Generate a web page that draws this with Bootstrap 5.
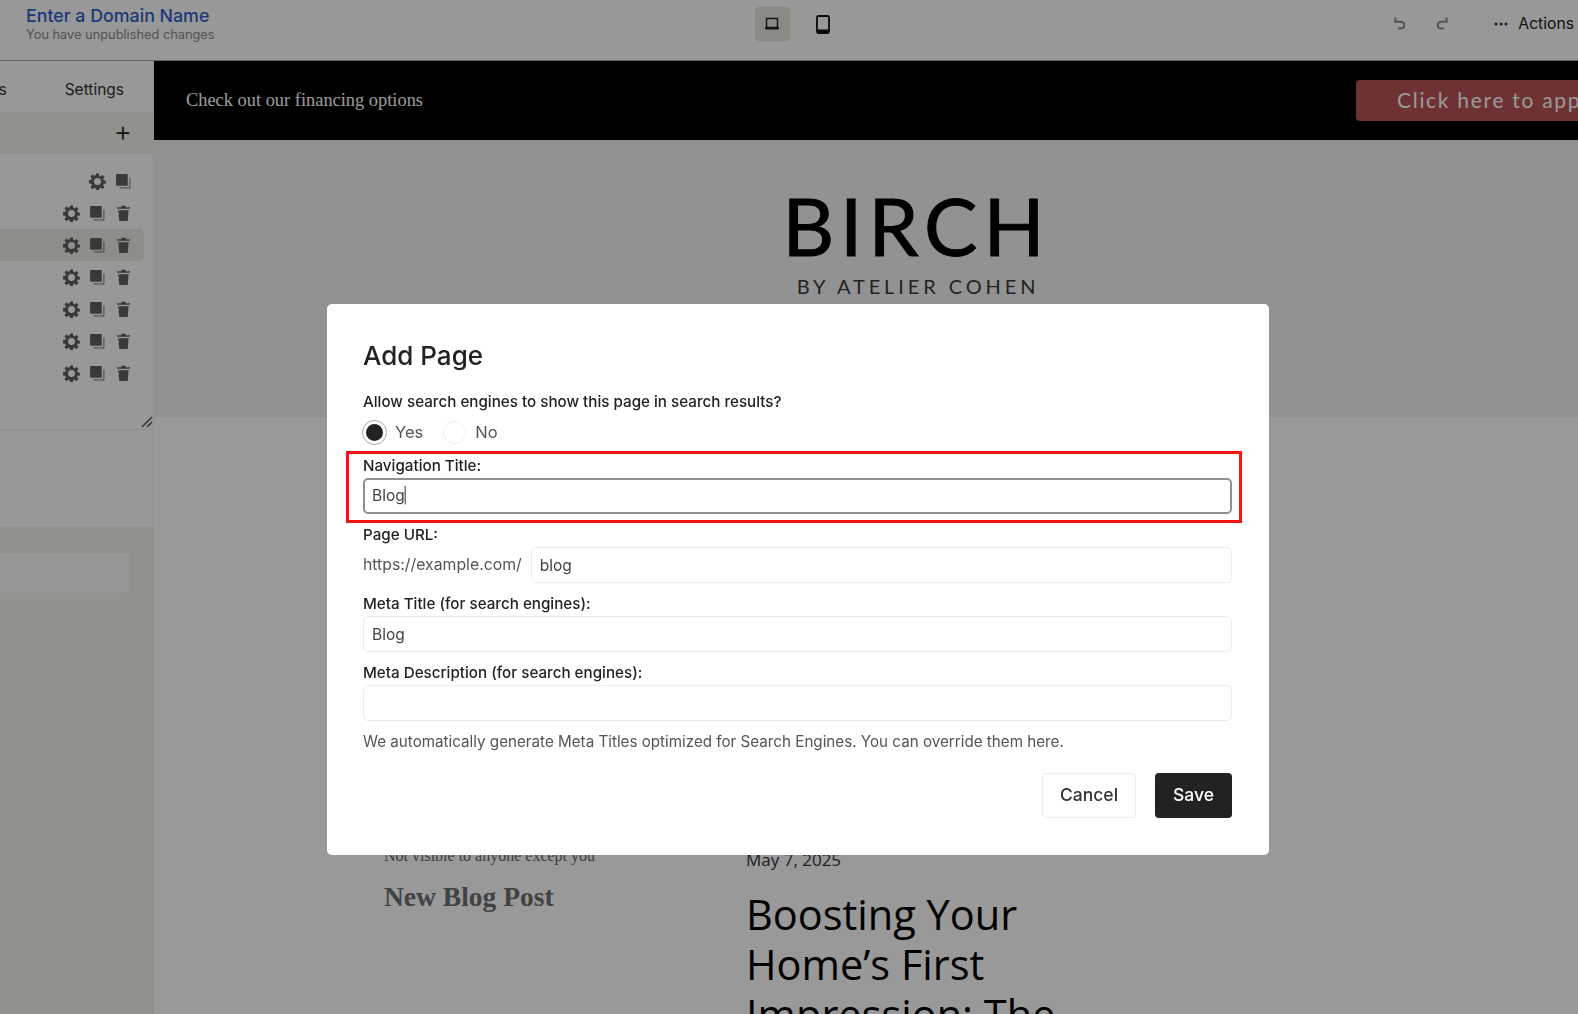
<!DOCTYPE html>
<html lang="en">
<head>
    <meta charset="UTF-8">
    <meta name="viewport" content="width=device-width, initial-scale=1.0">
    <title>Add Page</title>
    <link href="https://cdn.jsdelivr.net/npm/bootstrap@5.3.0/dist/css/bootstrap.min.css" rel="stylesheet">
    <style>
        html, body { height: 100%; overflow: hidden; }
        body { font-family: "Inter", "Liberation Sans", sans-serif; background: #fff; color: #222; }

        /* editor behind the dialog */
        .top-bar { height: 61px; padding-bottom: 12px; border-bottom: 1px solid #a8a8a8; background: #fdfdfd; }
        .domain-block { width: 755px; padding: 1px 0 0 26px; }
        .domain-name { font-size: 17.800px; font-weight: 500; line-height: 19px; color: #2f5fc9; }
        .domain-note { font-size: 12.800px; line-height: 16px; color: #8a8a8a; margin-top: 2px; }
        .device-btn { width: 35px; height: 34px; border-radius: 4px; }
        .device-btn.is-on { background: #e8e8df; }
        .device-btn svg { position: relative; left: -1px; }
        .history-btn { width: 17px; height: 17px; color: #8d8d8d; }
        .redo-btn { margin-left: 24px; }
        .more-dots { margin-left: 44px; }
        .actions-txt { font-size: 15.700px; color: #222; margin-left: 10px; }
        .work-area { height: 953px; }

        .side-panel { width: 154px; flex: none; overflow: hidden; border-right: 1px solid #f0f0ea; background: #fdfdfd; }
        .panel-tabs { height: 51px; padding: 6px 29px 0 0; gap: 58px; font-size: 15.500px; color: #333; }
        .panel-head { height: 42px; padding: 0 21px 4px 0; background: #f0f0ea; font-size: 28px; font-weight: 300; line-height: 1; color: #222; }
        .page-list { height: 276px; padding: 11px 9px 0 0; border-bottom: 1px solid #eeeeea; position: relative; }
        .page-row { height: 32px; padding-right: 12px; gap: 9px; border-radius: 0 5px 5px 0; color: #5f5f5f; }
        .page-row.is-on { background: #ecece6; }
        .page-row svg { width: 17px; height: 17px; }
        .resize-mark { position: absolute; right: 0; bottom: 1px; width: 12px; height: 12px; color: #555; }
        .panel-gap { height: 97px; }
        .panel-lower { height: 490px; padding-top: 26px; background: #f0f0ea; }
        .lower-box { width: 129px; height: 39px; background: #fafaf7; }
        .lower-strip { width: 120px; height: 8px; background: #f5f5f0; }

        .promo-bar { height: 79px; padding: 0 0 0 32px; background: #000; overflow: hidden; }
        .promo-txt { font-family: "Liberation Serif", serif; font-size: 18.400px; color: #fff; }
        .promo-btn { height: 41px; margin-left: 933px; padding: 0 0 2px 41px; width: 300px; flex: none; border-radius: 4px; background: #b85454; color: #fff; font-family: "Lato", sans-serif; font-size: 21px; letter-spacing: 1.700px; white-space: nowrap; }
        .logo-band { height: 277px; padding-top: 45px; background: #f3f3f3; text-align: center; }
        .logo-main { font-family: "Lato", sans-serif; font-size: 80px; line-height: 80px; letter-spacing: 6px; color: #000; padding-left: 101px; -webkit-text-stroke: 1px #000; }
        .logo-sub { font-family: "Lato", sans-serif; font-size: 20px; line-height: 24px; letter-spacing: 3.900px; color: #3a3a3a; padding-left: 104px; margin-top: 9px; }
        .blog-area { padding: 429px 0 0 230px; background: #fff; }
        .draft-col { width: 362px; }
        .draft-note { font-family: "Liberation Serif", serif; font-size: 16px; line-height: 20px; color: #666; }
        .draft-title { font-family: "Liberation Serif", serif; font-size: 27.500px; font-weight: 700; line-height: 32px; color: #6e6e6e; margin-top: 15px; }
        .post-col { width: 340px; padding-top: 4px; }
        .post-date { font-family: "Open Sans", sans-serif; font-size: 17px; line-height: 20px; color: #333; }
        .post-title { font-family: "Open Sans", sans-serif; font-size: 41.500px; font-weight: 400; line-height: 50px; color: #000; margin-top: 19px; }

        /* dialog */
        .modal-backdrop.show { opacity: .4; }
        .add-page-dialog { width: 942px; max-width: none; margin: 304px 0 0 327px; }
        .add-page-dialog .modal-content { height: 551px; padding: 33px 37px 0 36px; border: 0; border-radius: 5px; }
        .dialog-title { font-size: 26px; font-weight: 500; line-height: 38px; color: #222; margin-bottom: 18px; }
        .field-label { display: block; margin: 0; font-size: 15.200px; font-weight: 500; line-height: 18px; color: #222; }
        .radio-row { gap: 20px; height: 24px; margin: 9px 0 7px; font-size: 16.500px; color: #555; }
        .radio-dot { width: 23px; height: 23px; margin: 0 9px 0 0; border: 1px solid #eeeee8; box-shadow: none; }
        .radio-dot:checked { background-color: #222; background-image: none; border: 3px solid #fff; outline: 1px solid #aaa; }
        .title-frame { height: 72px; margin: 0 -10px 0 -17px; padding: 3px 7px 0 14px; border: 3px solid #f51414; }
        .title-frame .field-label { margin-bottom: 3px; }
        .page-input { height: 36px; padding: 0 8px; border: 1px solid #eeeee6; border-radius: 5px; font-size: 15.500px; color: #444; box-shadow: none; }
        .title-frame .page-input { border: 2px solid #909090; padding: 0 7px; }
        .text-caret { position: relative; left: -2px; font-weight: 300; color: #222; }
        .field-block { margin-top: 12px; }
        .field-block .field-label { margin-bottom: 3px; }
        .url-block { margin-top: 3px; }
        .url-row { gap: 9px; }
        .url-prefix { font-size: 15.800px; color: #555; white-space: nowrap; }
        .help-note { font-size: 15.200px; line-height: 20px; color: #555; margin: 11px 0 21px; }
        .dialog-btns { gap: 19px; }
        .dialog-btn { height: 45px; font-size: 17.500px; font-weight: 500; border-radius: 4px; padding: 0 10px; }
        .btn-quiet { width: 94px; border: 1px solid #eeeee6; color: #333; background: #fff; }
        .btn-solid { width: 77px; border: 0; color: #fff; background: #222; }
    </style>
</head>
<body>
    <!-- icons -->
    <svg width="0" height="0" class="position-absolute">
        <symbol id="ic-gear" viewBox="0 0 16 16"><path fill="currentColor" fill-rule="evenodd" d="M6.700.5h2.600l.4 2.200 1.200.5 1.900-1.300 1.800 1.800-1.300 1.900.5 1.200 2.200.4v2.600l-2.200.4-.5 1.200 1.300 1.900-1.800 1.800-1.900-1.300-1.200.5-.4 2.200H6.700l-.4-2.200-1.200-.5-1.900 1.300-1.800-1.800 1.300-1.900-.5-1.200-2.200-.4V6.700l2.200-.4.5-1.200-1.300-1.900 1.800-1.800 1.900 1.300 1.200-.5zM8 4.700a3.300 3.300 0 1 0 0 6.600a3.300 3.300 0 0 0 0-6.600z"/></symbol>
        <symbol id="ic-copy" viewBox="0 0 16 16"><rect x="1" y="1" width="11" height="11" rx="1" fill="currentColor"/><path d="M14 4.500V14H4.500" fill="none" stroke="currentColor" stroke-width="1.200" opacity=".7"/></symbol>
        <symbol id="ic-trash" viewBox="0 0 16 16"><path fill="currentColor" d="M6 .8h4v1.300h4v1.500H2V2.100h4zM3.200 5h9.600l-.8 10H4z"/></symbol>
    </svg>

    <!-- Top bar -->
    <div class="top-bar d-flex align-items-center">
        <div class="domain-block flex-shrink-0">
            <div class="domain-name">Enter a Domain Name</div>
            <div class="domain-note">You have unpublished changes</div>
        </div>
        <div class="device-btn is-on d-flex align-items-center justify-content-center flex-shrink-0">
            <svg width="16" height="14" viewBox="0 0 16 14"><rect x="2.500" y="1.500" width="11" height="9" fill="none" stroke="#222" stroke-width="1.500"/><rect x="1" y="10.500" width="14" height="2" fill="#222"/></svg>
        </div>
        <div class="device-btn d-flex align-items-center justify-content-center flex-shrink-0 ms-3">
            <svg width="14" height="19" viewBox="0 0 14 19"><rect x="1" y="1" width="12" height="17" rx="1.500" fill="none" stroke="#111" stroke-width="1.800"/><rect x="1" y="14.500" width="12" height="3.500" fill="#111"/></svg>
        </div>
        <div class="d-flex align-items-center ms-auto flex-shrink-0">
            <svg class="history-btn" viewBox="0 0 20 20"><path d="M4 3v5h5M4.500 8h6a4 4 0 0 1 0 8H7" fill="none" stroke="currentColor" stroke-width="2.400"/></svg>
            <svg class="history-btn redo-btn" viewBox="0 0 20 20"><path d="M16 3v5h-5M15.500 8h-6a4 4 0 0 0 0 8H13" fill="none" stroke="currentColor" stroke-width="2.400"/></svg>
            <svg class="more-dots" width="14" height="4" viewBox="0 0 14 4"><circle cx="2" cy="2" r="1.500" fill="#333"/><circle cx="7" cy="2" r="1.500" fill="#333"/><circle cx="12" cy="2" r="1.500" fill="#333"/></svg>
            <span class="actions-txt me-1">Actions</span>
        </div>
    </div>

    <div class="work-area d-flex">
        <!-- Left panel -->
        <aside class="side-panel">
            <div class="panel-tabs d-flex align-items-center justify-content-end"><span>Pages</span><span>Settings</span></div>
            <div class="panel-head d-flex align-items-center justify-content-end">+</div>
            <div class="page-list">
                <div class="page-row d-flex align-items-center justify-content-end">
                    <svg><use href="#ic-gear"/></svg><svg><use href="#ic-copy"/></svg>
                </div>
                <div class="page-row d-flex align-items-center justify-content-end"><svg><use href="#ic-gear"/></svg><svg><use href="#ic-copy"/></svg><svg><use href="#ic-trash"/></svg></div>
                <div class="page-row is-on d-flex align-items-center justify-content-end"><svg><use href="#ic-gear"/></svg><svg><use href="#ic-copy"/></svg><svg><use href="#ic-trash"/></svg></div>
                <div class="page-row d-flex align-items-center justify-content-end"><svg><use href="#ic-gear"/></svg><svg><use href="#ic-copy"/></svg><svg><use href="#ic-trash"/></svg></div>
                <div class="page-row d-flex align-items-center justify-content-end"><svg><use href="#ic-gear"/></svg><svg><use href="#ic-copy"/></svg><svg><use href="#ic-trash"/></svg></div>
                <div class="page-row d-flex align-items-center justify-content-end"><svg><use href="#ic-gear"/></svg><svg><use href="#ic-copy"/></svg><svg><use href="#ic-trash"/></svg></div>
                <div class="page-row d-flex align-items-center justify-content-end"><svg><use href="#ic-gear"/></svg><svg><use href="#ic-copy"/></svg><svg><use href="#ic-trash"/></svg></div>
                <svg class="resize-mark" viewBox="0 0 12 12"><path d="M1 11 11 1M6 11l5-5" stroke="currentColor" stroke-width="1.500"/></svg>
            </div>
            <div class="panel-gap"></div>
            <div class="panel-lower">
                <div class="lower-box"></div>
                <div class="lower-strip"></div>
            </div>
        </aside>

        <!-- Site preview -->
        <main class="flex-grow-1 overflow-hidden">
            <div class="promo-bar d-flex align-items-center">
                <span class="promo-txt flex-shrink-0">Check out our financing options</span>
                <span class="promo-btn d-flex align-items-center">Click here to apply</span>
            </div>
            <div class="logo-band">
                <div class="logo-main">BIRCH</div>
                <div class="logo-sub">BY ATELIER COHEN</div>
            </div>
            <div class="blog-area d-flex">
                <div class="draft-col">
                    <div class="draft-note">Not visible to anyone except you</div>
                    <div class="draft-title">New Blog Post</div>
                </div>
                <div class="post-col">
                    <div class="post-date">May 7, 2025</div>
                    <h2 class="post-title">Boosting Your Home’s First Impression: The</h2>
                </div>
            </div>
        </main>
    </div>

    <div class="modal-backdrop show"></div>

    <!-- Modal Add Page -->
    <div class="modal d-block" tabindex="-1">
        <div class="modal-dialog add-page-dialog">
            <div class="modal-content">
                <h5 class="dialog-title">Add Page</h5>
                <form>
                    <div class="field-label">Allow search engines to show this page in search results?</div>
                    <div class="radio-row d-flex align-items-center">
                        <div class="d-flex align-items-center">
                            <input class="form-check-input radio-dot" type="radio" name="indexable" id="indexYes" checked>
                            <label for="indexYes">Yes</label>
                        </div>
                        <div class="d-flex align-items-center">
                            <input class="form-check-input radio-dot" type="radio" name="indexable" id="indexNo">
                            <label for="indexNo">No</label>
                        </div>
                    </div>
                    <div class="title-frame">
                        <label class="field-label" for="navTitle">Navigation Title:</label>
                        <div class="form-control page-input d-flex align-items-center" id="navTitle">Blog<span class="text-caret">|</span></div>
                    </div>
                    <div class="field-block url-block">
                        <label class="field-label" for="pageUrl">Page URL:</label>
                        <div class="url-row d-flex align-items-center">
                            <span class="url-prefix">https://example.com/</span>
                            <input type="text" class="form-control page-input" id="pageUrl" value="blog">
                        </div>
                    </div>
                    <div class="field-block">
                        <label class="field-label" for="metaTitle">Meta Title (for search engines):</label>
                        <input type="text" class="form-control page-input" id="metaTitle" value="Blog">
                    </div>
                    <div class="field-block">
                        <label class="field-label" for="metaDesc">Meta Description (for search engines):</label>
                        <input type="text" class="form-control page-input" id="metaDesc">
                    </div>
                    <p class="help-note">We automatically generate Meta Titles optimized for Search Engines. You can override them here.</p>
                    <div class="dialog-btns d-flex justify-content-end">
                        <button type="button" class="btn dialog-btn btn-quiet">Cancel</button>
                        <button type="button" class="btn dialog-btn btn-solid">Save</button>
                    </div>
                </form>
            </div>
        </div>
    </div>

    <script src="https://cdn.jsdelivr.net/npm/bootstrap@5.3.0/dist/js/bootstrap.bundle.min.js"></script>
</body>
</html>
